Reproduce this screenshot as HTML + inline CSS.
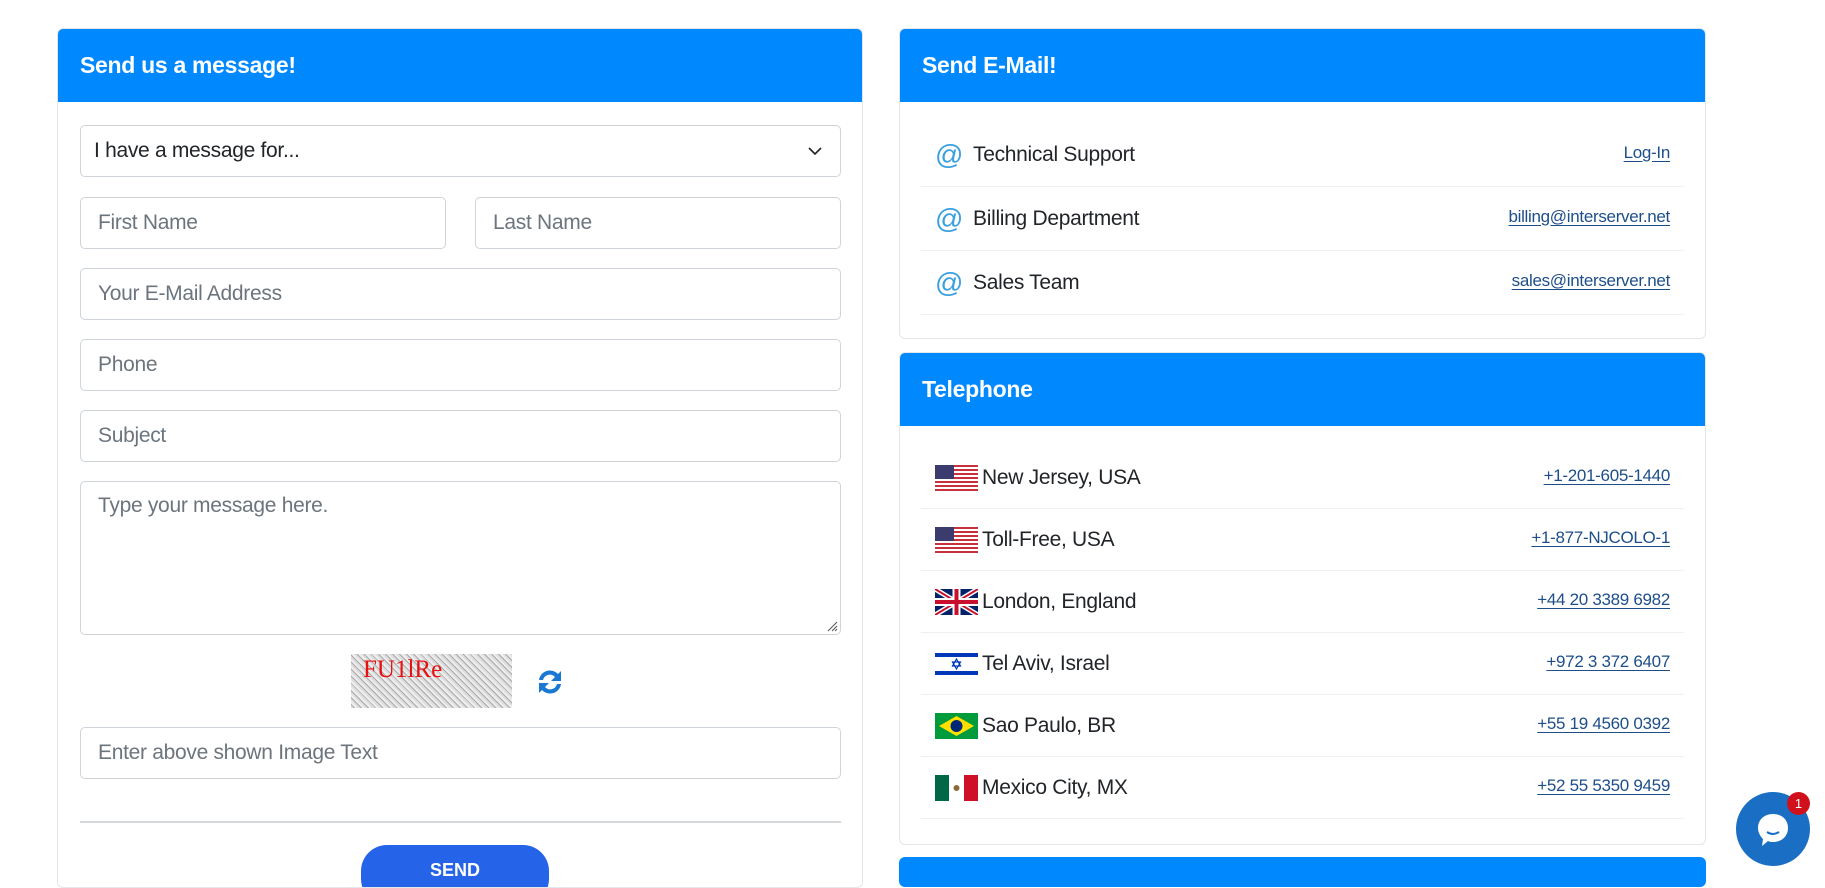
<!DOCTYPE html>
<html><head><meta charset="utf-8"><style>
*{box-sizing:border-box;margin:0;padding:0}
body{width:1825px;height:873px;overflow:hidden;background:#fff;font-family:"Liberation Sans",sans-serif;position:relative;color:#212529}
.card{position:absolute;border:1px solid #e3e6ea;border-radius:6px;background:#fff;overflow:hidden}
.hd{position:absolute;left:0;top:0;right:0;height:73px;background:#0088ff;color:#fff;font-weight:bold;font-size:23px;padding-left:22px;line-height:73px;letter-spacing:-0.3px}
.in{position:absolute;border:1px solid #ced4da;border-radius:5px;background:#fff;font-size:21px;color:#6c757d;padding-left:17px;letter-spacing:-0.3px}
.row{position:absolute;left:21px;right:21px;border-bottom:1px solid #eef0f2;font-size:21px;letter-spacing:-0.3px}
.row .t{position:absolute;left:52px;top:50%;transform:translateY(-50%)}
.row .t2{left:61px}
.row a{position:absolute;right:14px;top:50%;transform:translateY(-60%);font-size:17px;color:#1d4e89;text-decoration:underline;text-underline-offset:3px}
.at{position:absolute;left:14px;top:50%;transform:translateY(-50%);color:#3ba0e0;font-size:28px}
.flag{position:absolute;left:14px;top:50%;transform:translateY(-50%);width:43px;height:26px}
</style></head><body>

<div class="card" style="left:57px;top:28px;width:806px;height:860px">
<div class="hd">Send us a message!</div>
<div class="in" style="left:22px;top:96px;width:761px;height:52px;line-height:50px;color:#212529;padding-left:13px">I have a message for...
<svg style="position:absolute;right:18px;top:20px" width="14" height="10" viewBox="0 0 14 10"><path d="M1 2l6 6 6-6" stroke="#222" stroke-width="1.6" fill="none"/></svg></div>
<div class="in" style="left:22px;top:168px;width:366px;height:52px;line-height:50px">First Name</div>
<div class="in" style="left:417px;top:168px;width:366px;height:52px;line-height:50px">Last Name</div>
<div class="in" style="left:22px;top:239px;width:761px;height:52px;line-height:50px">Your E-Mail Address</div>
<div class="in" style="left:22px;top:310px;width:761px;height:52px;line-height:50px">Phone</div>
<div class="in" style="left:22px;top:381px;width:761px;height:52px;line-height:50px">Subject</div>
<div class="in" style="left:22px;top:452px;width:761px;height:154px;padding-top:12px">Type your message here.
<svg style="position:absolute;right:2px;bottom:2px" width="12" height="12"><path d="M11 2L2 11M11 6L6 11M11 9L9 11" stroke="#555" stroke-width="1"/></svg></div>
<div style="position:absolute;left:293px;top:625px;width:161px;height:54px;background:repeating-linear-gradient(45deg,#ddd 0 2px,#aaa 2px 3px,#eee 3px 5px);"></div>
<div style="position:absolute;left:305px;top:627px;font-family:'Liberation Serif',serif;font-size:25px;color:#e81010">FU1lRe</div>
<svg style="position:absolute;left:476px;top:637px" width="32" height="32" viewBox="0 0 32 32"><path d="M5 14a11 11 0 0 1 19-6l3-3v10h-10l4-4a7 7 0 0 0-12 3z" fill="#1a78d2"/><path d="M27 18a11 11 0 0 1-19 6l-3 3V17h10l-4 4a7 7 0 0 0 12-3z" fill="#1a78d2"/></svg>
<div class="in" style="left:22px;top:698px;width:761px;height:52px;line-height:50px">Enter above shown Image Text</div>
<div style="position:absolute;left:22px;top:792px;width:761px;border-top:2px solid #d5d8db"></div>
<div style="position:absolute;left:303px;top:816px;width:188px;height:60px;border-radius:26px;background:#2563e8;color:#fff;font-weight:bold;font-size:18px;text-align:center;line-height:50px">SEND</div>
</div>

<div class="card" style="left:899px;top:28px;width:807px;height:311px">
<div class="hd">Send E-Mail!</div>
<div class="row" style="top:94px;height:64px"><span class="at">@</span><span class="t">Technical Support</span><a>Log-In</a></div>
<div class="row" style="top:158px;height:64px"><span class="at">@</span><span class="t">Billing Department</span><a>billing@interserver.net</a></div>
<div class="row" style="top:222px;height:64px"><span class="at">@</span><span class="t">Sales Team</span><a>sales@interserver.net</a></div>
</div>

<div class="card" style="left:899px;top:352px;width:807px;height:493px">
<div class="hd">Telephone</div>
<div class="row" style="top:94px;height:62px">
<svg class="flag" viewBox="0 0 43 26"><rect width="43" height="26" fill="#fff"/><g fill="#c8313e"><rect y="0" width="43" height="2"/><rect y="4" width="43" height="2"/><rect y="8" width="43" height="2"/><rect y="12" width="43" height="2"/><rect y="16" width="43" height="2"/><rect y="20" width="43" height="2"/><rect y="24" width="43" height="2"/></g><rect width="19" height="14" fill="#3c3b6e"/></svg>
<span class="t t2">New Jersey, USA</span><a>+1-201-605-1440</a></div>
<div class="row" style="top:156px;height:62px">
<svg class="flag" viewBox="0 0 43 26"><rect width="43" height="26" fill="#fff"/><g fill="#c8313e"><rect y="0" width="43" height="2"/><rect y="4" width="43" height="2"/><rect y="8" width="43" height="2"/><rect y="12" width="43" height="2"/><rect y="16" width="43" height="2"/><rect y="20" width="43" height="2"/><rect y="24" width="43" height="2"/></g><rect width="19" height="14" fill="#3c3b6e"/></svg>
<span class="t t2">Toll-Free, USA</span><a>+1-877-NJCOLO-1</a></div>
<div class="row" style="top:218px;height:62px">
<svg class="flag" viewBox="0 0 43 26"><rect width="43" height="26" fill="#012169"/><path d="M0 0L43 26M43 0L0 26" stroke="#fff" stroke-width="5"/><path d="M0 0L43 26M43 0L0 26" stroke="#c8102e" stroke-width="2"/><path d="M21.5 0V26M0 13H43" stroke="#fff" stroke-width="8"/><path d="M21.5 0V26M0 13H43" stroke="#c8102e" stroke-width="4"/></svg>
<span class="t t2">London, England</span><a>+44 20 3389 6982</a></div>
<div class="row" style="top:280px;height:62px">
<svg class="flag" viewBox="0 0 43 26"><rect width="43" height="26" fill="#fff"/><rect y="2" width="43" height="4" fill="#0038b8"/><rect y="20" width="43" height="4" fill="#0038b8"/><path d="M21.5 8l4 7h-8zM21.5 18l4-7h-8z" fill="none" stroke="#0038b8" stroke-width="1.2"/></svg>
<span class="t t2">Tel Aviv, Israel</span><a>+972 3 372 6407</a></div>
<div class="row" style="top:342px;height:62px">
<svg class="flag" viewBox="0 0 43 26"><rect width="43" height="26" fill="#009c3b"/><path d="M21.5 3L39 13 21.5 23 4 13z" fill="#ffdf00"/><circle cx="21.5" cy="13" r="6" fill="#002776"/></svg>
<span class="t t2">Sao Paulo, BR</span><a>+55 19 4560 0392</a></div>
<div class="row" style="top:404px;height:62px">
<svg class="flag" viewBox="0 0 43 26"><rect width="14" height="26" fill="#006847"/><rect x="14" width="15" height="26" fill="#fff"/><rect x="29" width="14" height="26" fill="#ce1126"/><circle cx="21.5" cy="13" r="3" fill="#8b6a3a"/></svg>
<span class="t t2">Mexico City, MX</span><a>+52 55 5350 9459</a></div>
</div>

<div style="position:absolute;left:899px;top:857px;width:807px;height:30px;background:#0088ff;border-radius:6px"></div>

<div style="position:absolute;left:1736px;top:792px;width:74px;height:74px;border-radius:50%;background:#1a6fc4"></div>
<svg style="position:absolute;left:1754px;top:810px" width="38" height="40" viewBox="0 0 38 40"><path d="M19 4c9 0 15 6 15 14s-6 14-15 14c-2 0-3 0-5-1l-6 5 1-7c-3-3-5-7-5-11C4 10 10 4 19 4z" fill="#fff"/><path d="M13 22q6 4 12 0" stroke="#1a6fc4" stroke-width="2" fill="none"/></svg>
<div style="position:absolute;left:1787px;top:792px;width:23px;height:23px;border-radius:50%;background:#d0111b;color:#fff;font-size:13px;text-align:center;line-height:23px">1</div>
</body></html>
